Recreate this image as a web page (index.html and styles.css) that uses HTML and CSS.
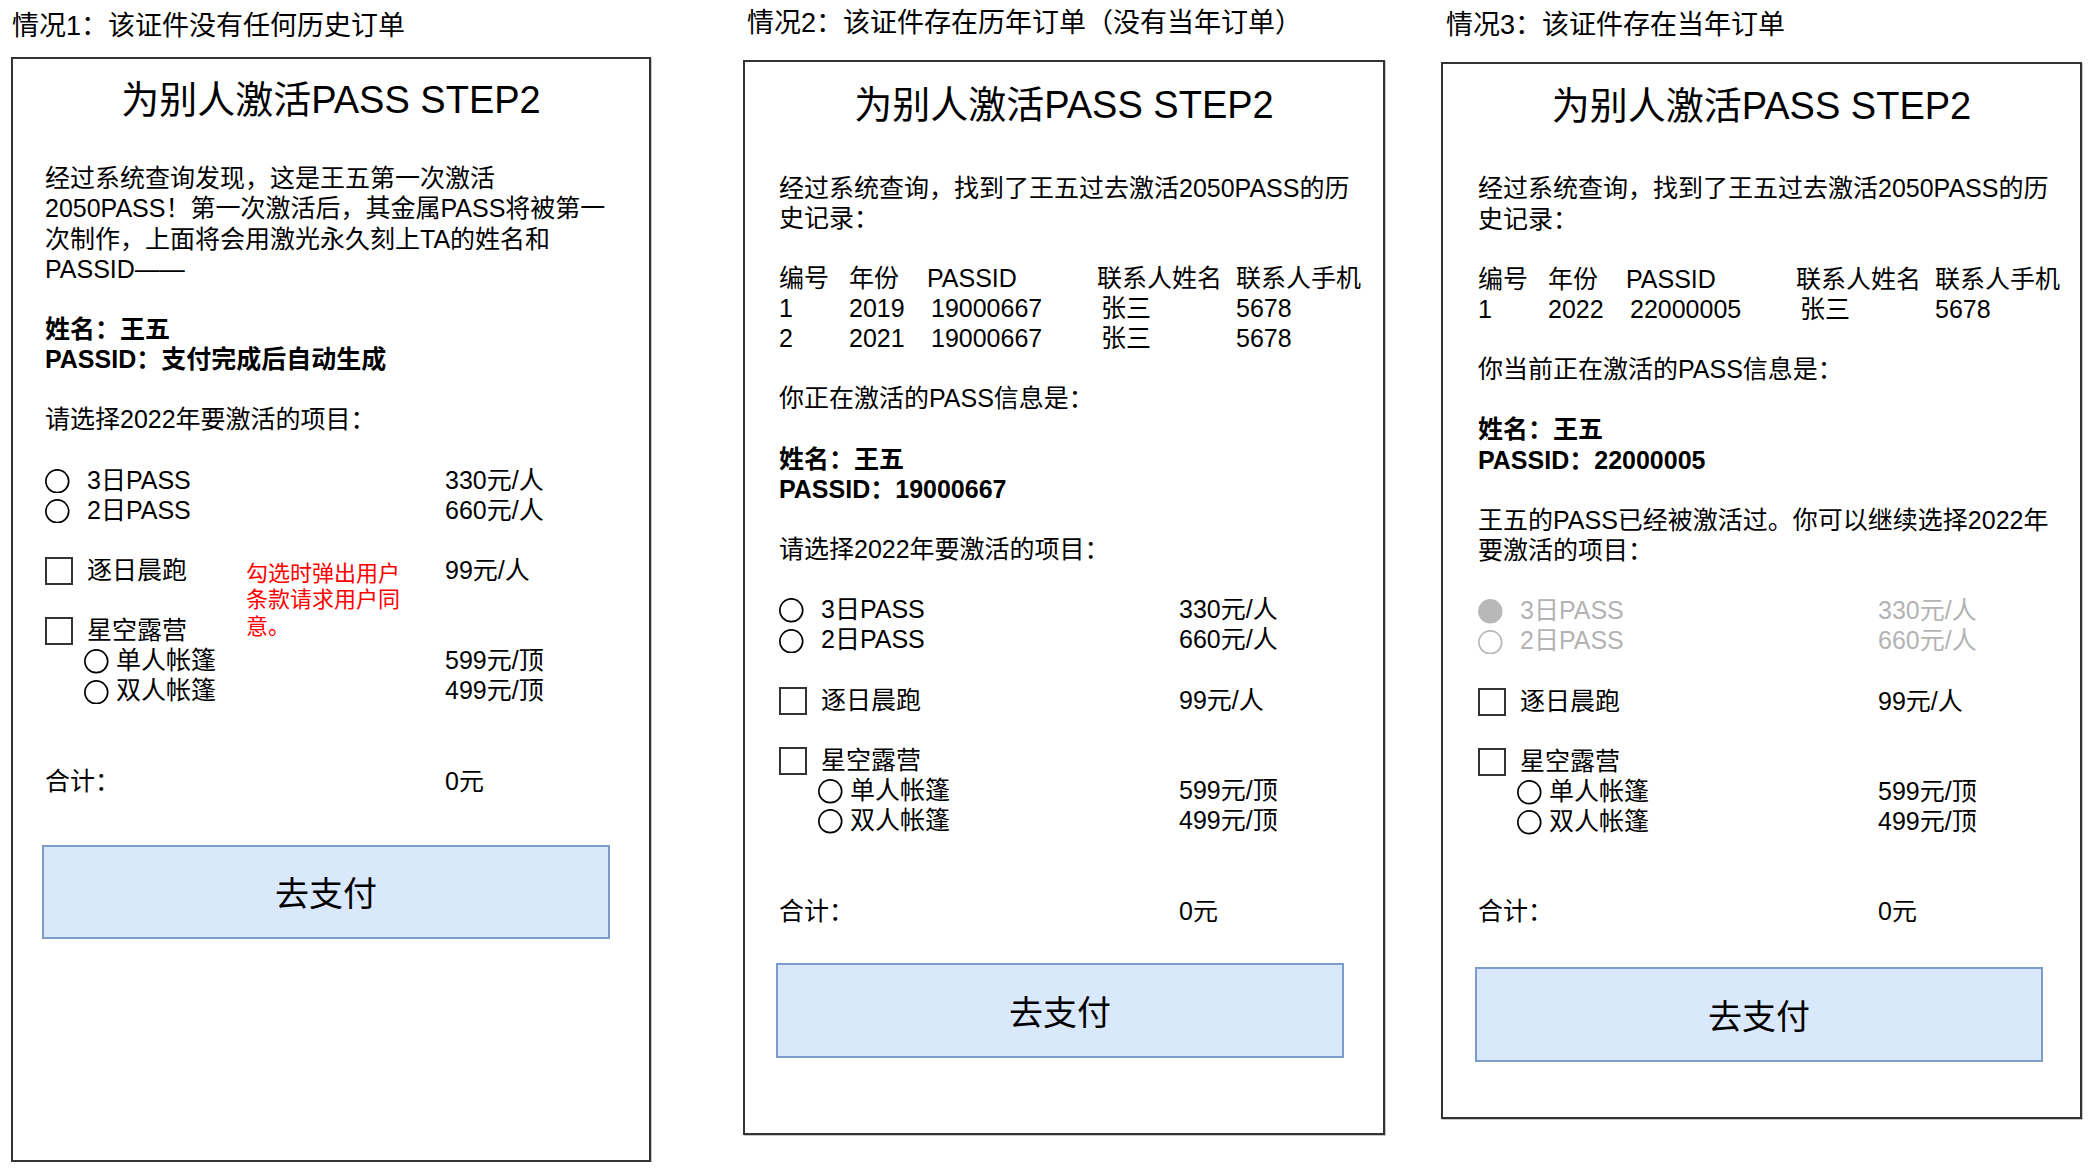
FILE: index.html
```html
<!DOCTYPE html>
<html lang="zh-CN">
<head>
<meta charset="utf-8">
<title>为别人激活PASS STEP2</title>
<link rel="stylesheet" href="styles.css">
</head>
<body>
<div class="board">

  <section class="col col-1">
    <div class="case-title">情况1：该证件没有任何历史订单</div>
    <div class="panel p1">
      <div class="heading">为别人激活PASS STEP2</div>
      <div class="content">
        <div class="row">经过系统查询发现，这是王五第一次激活</div>
        <div class="row">2050PASS！第一次激活后，其金属PASS将被第一</div>
        <div class="row">次制作，上面将会用激光永久刻上TA的姓名和</div>
        <div class="row">PASSID——</div>
        <div class="row"></div>
        <div class="row bold">姓名：王五</div>
        <div class="row bold">PASSID：支付完成后自动生成</div>
        <div class="row"></div>
        <div class="row">请选择2022年要激活的项目：</div>
        <div class="row"></div>
        <div class="row"><div class="left"><svg class="radio" viewBox="0 0 25 25"><circle cx="12.5" cy="12.5" r="11.6"/></svg><span>3日PASS</span></div><span>330元/人</span></div>
        <div class="row"><div class="left"><svg class="radio" viewBox="0 0 25 25"><circle cx="12.5" cy="12.5" r="11.6"/></svg><span>2日PASS</span></div><span>660元/人</span></div>
        <div class="row"></div>
        <div class="row"><div class="left"><span class="chk"></span><span>逐日晨跑</span></div><span>99元/人</span></div>
        <div class="row"></div>
        <div class="row"><div class="left"><span class="chk"></span><span>星空露营</span></div></div>
        <div class="row"><div class="left sub"><svg class="radio" viewBox="0 0 25 25"><circle cx="12.5" cy="12.5" r="11.6"/></svg><span>单人帐篷</span></div><span>599元/顶</span></div>
        <div class="row"><div class="left sub"><svg class="radio" viewBox="0 0 25 25"><circle cx="12.5" cy="12.5" r="11.6"/></svg><span>双人帐篷</span></div><span>499元/顶</span></div>
        <div class="row"></div>
        <div class="row"></div>
        <div class="row"><div class="left">合计：</div><span>0元</span></div>
      </div>
      <div class="pay">去支付</div>
      <div class="note"><span>勾选时弹出用户</span><span>条款请求用户同</span><span>意。</span></div>
    </div>
  </section>

  <section class="col col-2">
    <div class="case-title">情况2：该证件存在历年订单（没有当年订单）</div>
    <div class="panel p2">
      <div class="heading">为别人激活PASS STEP2</div>
      <div class="content">
        <div class="row">经过系统查询，找到了王五过去激活2050PASS的历</div>
        <div class="row">史记录：</div>
        <div class="row"></div>
        <div class="row tbl"><span class="c1">编号</span><span class="c2">年份</span><span class="c3">PASSID</span><span class="c4">联系人姓名</span><span>联系人手机</span></div>
        <div class="row tbl val"><span class="c1">1</span><span class="c2">2019</span><span class="c3">19000667</span><span class="c4">张三</span><span>5678</span></div>
        <div class="row tbl val"><span class="c1">2</span><span class="c2">2021</span><span class="c3">19000667</span><span class="c4">张三</span><span>5678</span></div>
        <div class="row"></div>
        <div class="row">你正在激活的PASS信息是：</div>
        <div class="row"></div>
        <div class="row bold">姓名：王五</div>
        <div class="row bold">PASSID：19000667</div>
        <div class="row"></div>
        <div class="row">请选择2022年要激活的项目：</div>
        <div class="row"></div>
        <div class="row"><div class="left"><svg class="radio" viewBox="0 0 25 25"><circle cx="12.5" cy="12.5" r="11.6"/></svg><span>3日PASS</span></div><span>330元/人</span></div>
        <div class="row"><div class="left"><svg class="radio" viewBox="0 0 25 25"><circle cx="12.5" cy="12.5" r="11.6"/></svg><span>2日PASS</span></div><span>660元/人</span></div>
        <div class="row"></div>
        <div class="row"><div class="left"><span class="chk"></span><span>逐日晨跑</span></div><span>99元/人</span></div>
        <div class="row"></div>
        <div class="row"><div class="left"><span class="chk"></span><span>星空露营</span></div></div>
        <div class="row"><div class="left sub"><svg class="radio" viewBox="0 0 25 25"><circle cx="12.5" cy="12.5" r="11.6"/></svg><span>单人帐篷</span></div><span>599元/顶</span></div>
        <div class="row"><div class="left sub"><svg class="radio" viewBox="0 0 25 25"><circle cx="12.5" cy="12.5" r="11.6"/></svg><span>双人帐篷</span></div><span>499元/顶</span></div>
        <div class="row"></div>
        <div class="row"></div>
        <div class="row"><div class="left">合计：</div><span>0元</span></div>
      </div>
      <div class="pay">去支付</div>
    </div>
  </section>

  <section class="col col-3">
    <div class="case-title">情况3：该证件存在当年订单</div>
    <div class="panel p3">
      <div class="heading">为别人激活PASS STEP2</div>
      <div class="content">
        <div class="row">经过系统查询，找到了王五过去激活2050PASS的历</div>
        <div class="row">史记录：</div>
        <div class="row"></div>
        <div class="row tbl"><span class="c1">编号</span><span class="c2">年份</span><span class="c3">PASSID</span><span class="c4">联系人姓名</span><span>联系人手机</span></div>
        <div class="row tbl val"><span class="c1">1</span><span class="c2">2022</span><span class="c3">22000005</span><span class="c4">张三</span><span>5678</span></div>
        <div class="row"></div>
        <div class="row">你当前正在激活的PASS信息是：</div>
        <div class="row"></div>
        <div class="row bold">姓名：王五</div>
        <div class="row bold">PASSID：22000005</div>
        <div class="row"></div>
        <div class="row">王五的PASS已经被激活过。你可以继续选择2022年</div>
        <div class="row">要激活的项目：</div>
        <div class="row"></div>
        <div class="row dis"><div class="left"><svg class="radio on" viewBox="0 0 25 25"><circle cx="12.5" cy="12.5" r="11.6"/></svg><span>3日PASS</span></div><span>330元/人</span></div>
        <div class="row dis"><div class="left"><svg class="radio" viewBox="0 0 25 25"><circle cx="12.5" cy="12.5" r="11.6"/></svg><span>2日PASS</span></div><span>660元/人</span></div>
        <div class="row"></div>
        <div class="row"><div class="left"><span class="chk"></span><span>逐日晨跑</span></div><span>99元/人</span></div>
        <div class="row"></div>
        <div class="row"><div class="left"><span class="chk"></span><span>星空露营</span></div></div>
        <div class="row"><div class="left sub"><svg class="radio" viewBox="0 0 25 25"><circle cx="12.5" cy="12.5" r="11.6"/></svg><span>单人帐篷</span></div><span>599元/顶</span></div>
        <div class="row"><div class="left sub"><svg class="radio" viewBox="0 0 25 25"><circle cx="12.5" cy="12.5" r="11.6"/></svg><span>双人帐篷</span></div><span>499元/顶</span></div>
        <div class="row"></div>
        <div class="row"></div>
        <div class="row"><div class="left">合计：</div><span>0元</span></div>
      </div>
      <div class="pay">去支付</div>
    </div>
  </section>

</div>
</body>
</html>
```

FILE: styles.css
```css
html, body {
  margin: 0;
  padding: 0;
  background: #ffffff;
}

body {
  color: #000000;
  font-family: "Liberation Sans", "Noto Sans CJK SC", sans-serif;
}

.board {
  display: flex;
  align-items: flex-start;
}

.col {
  flex: none;
}

.col-1 {
  margin-left: 11px;
  width: 640px;
  padding-top: 9.5px;
}

.col-2 {
  margin-left: 92px;
  width: 642px;
  padding-top: 7px;
}

.col-3 {
  margin-left: 56px;
  width: 641px;
  padding-top: 9px;
}

.case-title {
  font-size: 27px;
  line-height: 32px;
  height: 32px;
  white-space: nowrap;
}

.col-1 .case-title {
  padding-left: 1px;
  margin-bottom: 15.5px;
}

.col-2 .case-title {
  padding-left: 4px;
  margin-bottom: 21px;
}

.col-3 .case-title {
  padding-left: 5px;
  margin-bottom: 20.5px;
}

.panel {
  position: relative;
  box-sizing: border-box;
  border: 2px solid #333333;
  box-shadow: 1px 1px 0 rgba(0, 0, 0, 0.22);
  background: #ffffff;
}

.p1 { height: 1105px; }
.p2 { height: 1075px; }
.p3 { height: 1057.5px; }

.heading {
  font-size: 38px;
  line-height: 46px;
  height: 46px;
  text-align: center;
  white-space: nowrap;
}

.p1 .heading { margin-top: 18.4px; }
.p2 .heading { margin-top: 20px; }
.p3 .heading { margin-top: 19.2px; }

.content {
  font-size: 25px;
}

.p1 .content { margin-top: 39.9px; padding-left: 32px; }
.p2 .content { margin-top: 44.5px; padding-left: 34px; }
.p3 .content { margin-top: 44.8px; padding-left: 35px; }

.row {
  display: flex;
  height: 30.13px;
  line-height: 30.13px;
  white-space: nowrap;
}

.bold {
  font-weight: 700;
}

.left {
  display: flex;
  flex: none;
  width: 400px;
}

.radio {
  flex: none;
  width: 24.6px;
  height: 24.6px;
  margin-top: 4.2px;
  margin-right: 17.4px;
}

.radio circle {
  fill: none;
  stroke: #000000;
  stroke-width: 1.7;
}

.sub {
  padding-left: 39px;
  width: 361px;
}

.sub .radio {
  margin-right: 7.4px;
}

.chk {
  flex: none;
  box-sizing: border-box;
  width: 28px;
  height: 28px;
  margin-top: 2px;
  margin-right: 14px;
  border: 2px solid #333333;
}

.dis {
  color: #b3b3b3;
}

.dis .radio circle {
  stroke: #b8b8b8;
}

.dis .radio.on circle {
  fill: #b8b8b8;
}

.tbl .c1 { width: 70px; flex: none; }
.tbl .c2 { width: 78px; flex: none; }
.tbl .c3 { width: 170px; flex: none; }
.tbl .c4 { width: 139px; flex: none; }

.val .c3,
.val .c4 {
  box-sizing: border-box;
  padding-left: 4px;
}

.pay {
  box-sizing: border-box;
  width: 568px;
  display: flex;
  align-items: center;
  justify-content: center;
  background: #dae8fc;
  border: 2px solid #7c9dcc;
  font-size: 34px;
}

.p1 .pay { margin-left: 29px; margin-top: 49px; height: 94px; }
.p2 .pay { margin-left: 31px; margin-top: 37px; height: 95px; }
.p3 .pay { margin-left: 32px; margin-top: 40px; height: 95px; }

.note {
  position: absolute;
  left: 233px;
  top: 501.5px;
  display: flex;
  flex-direction: column;
  color: #ff0000;
  font-size: 22px;
  line-height: 26.7px;
  white-space: nowrap;
}
```
